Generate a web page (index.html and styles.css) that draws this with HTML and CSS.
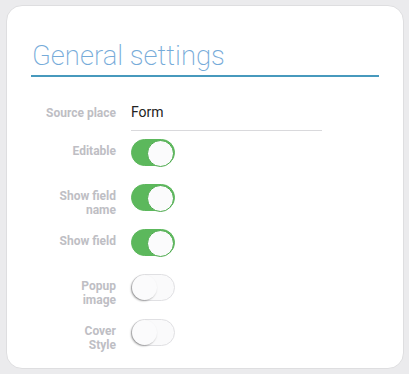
FILE: index.html
```html
<!DOCTYPE html>
<html lang="en">
<head>
  <meta charset="UTF-8">
  <title>General settings</title>
  <link rel="stylesheet" href="styles.css">
</head>
<body>
  <div class="card">
    <h2 class="card-title">General settings</h2>
    <div class="settings">
      <div class="row row-input">
        <div class="label nowrap">Source place</div>
        <div class="control">
          <div class="text-field">Form</div>
        </div>
      </div>
      <div class="row">
        <div class="label">Editable</div>
        <div class="control"><span class="switch on"></span></div>
      </div>
      <div class="row">
        <div class="label">Show field name</div>
        <div class="control"><span class="switch on"></span></div>
      </div>
      <div class="row">
        <div class="label">Show field</div>
        <div class="control"><span class="switch on"></span></div>
      </div>
      <div class="row">
        <div class="label">Popup image</div>
        <div class="control"><span class="switch"></span></div>
      </div>
      <div class="row">
        <div class="label">Cover Style</div>
        <div class="control"><span class="switch"></span></div>
      </div>
    </div>
  </div>
</body>
</html>
```

FILE: styles.css
```css
* {
  margin: 0;
  padding: 0;
  box-sizing: border-box;
}

body {
  background-color: #ebebed;
  font-family: Roboto, 'Liberation Sans', sans-serif;
  padding: 5px 5px 5px 6px;
}

.card {
  width: 398px;
  height: 364px;
  background: #fff;
  border: 1px solid #dedee0;
  border-radius: 16px;
  padding: 0 24px;
}

.card-title {
  margin-top: 31px;
  font-size: 27.5px;
  font-weight: 200;
  line-height: 38px;
  color: #76abd9;
  border-bottom: 2px solid #4799bd;
  padding-left: 1px;
  width: 348px;
}

.settings {
  padding-top: 24px;
}

.row {
  display: flex;
  align-items: flex-start;
  gap: 15px;
  height: 27px;
  margin-bottom: 18px;
}

.label {
  width: 85px;
  flex-shrink: 0;
  text-align: right;
  font-size: 12px;
  font-weight: 700;
  line-height: 14px;
  color: #bebec4;
  padding-top: 5px;
  padding-left: 25px;
}

.label.nowrap {
  white-space: nowrap;
  padding-left: 0;
}

.row-input {
  height: 30px;
  margin-bottom: 8px;
}

.text-field {
  width: 191px;
  height: 30px;
  padding-top: 2px;
  font-size: 14px;
  line-height: 18px;
  color: #222;
  border-bottom: 1px solid #d9d9dc;
}

.switch {
  display: block;
  position: relative;
  width: 44px;
  height: 27px;
  border-radius: 14px;
  background: #fafafb;
  border: 1px solid #e0e0e3;
}

.switch::after {
  content: '';
  position: absolute;
  top: 0;
  left: 0;
  width: 25px;
  height: 25px;
  border-radius: 50%;
  background: #fbfbfc;
  box-shadow: -1px 1px 2px rgba(0, 0, 0, 0.35);
}

.switch.on {
  background: #5cb85c;
  border-color: #5cb85c;
}

.switch.on::after {
  left: auto;
  right: 0;
  border: 1px solid #4caa4c;
  box-shadow: none;
}
```
